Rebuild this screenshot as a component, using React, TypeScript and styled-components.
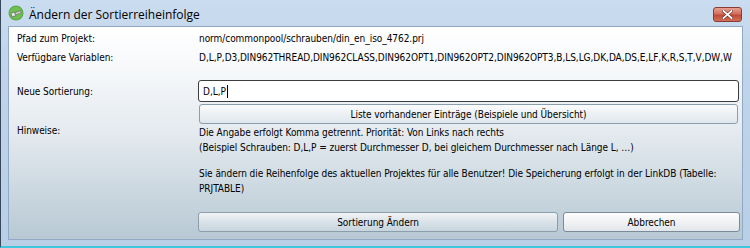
import React from "react";
import styled, { createGlobalStyle } from "styled-components";

const Global = createGlobalStyle`
  html, body { margin: 0; padding: 0; background: #fff; }
  #root { width: 750px; height: 248px; }
`;

const Window = styled.div`
  width: 750px;
  height: 248px;
  display: flex;
  flex-direction: column;
  box-sizing: border-box;
  background: linear-gradient(180deg, #cadcef 0%, #bfd4ea 30%, #b9cfe6 100%);
  border-left: 1px solid #39475a;
  border-bottom: 2px solid #3fc7e0;
  font-family: "DejaVu Sans Condensed", "DejaVu Sans", sans-serif;
  font-stretch: condensed;
  font-size: 10px;
  letter-spacing: -0.05px;
  color: #000;
  overflow: hidden;
`;

const TitleBar = styled.div`
  height: 26px;
  display: flex;
  align-items: center;
  padding: 0 8px 0 7px;
  gap: 5px;
  flex-shrink: 0;
`;

const Title = styled.div`
  flex: 1;
  font-family: "Open Sans", "Noto Sans", sans-serif;
  font-stretch: normal;
  letter-spacing: 0;
  font-size: 12px;
  color: #000;
  padding-top: 2px;
`;

const CloseButton = styled.div`
  width: 29px;
  height: 15px;
  margin-top: 3px;
  box-sizing: border-box;
  border: 1px solid #8a3a32;
  border-radius: 3px;
  background: linear-gradient(180deg, #e8a091 0%, #d46e5c 45%, #c24a36 55%, #d07058 100%);
  display: flex;
  align-items: center;
  justify-content: center;
`;

const Middle = styled.div`
  flex: 1;
  display: flex;
  min-width: 0;
  padding: 0 7px 6px 7px;
`;

const Client = styled.div`
  flex: 1;
  min-width: 0;
  box-sizing: border-box;
  border: 1px solid #8fa9c6;
  background: linear-gradient(180deg, #ffffff 0%, #f6f8fa 20%, #e4eaef 50%, #cdd9e1 75%, #b8c9d4 100%);
  padding: 3px 2px 7px 8px;
  display: flex;
  flex-direction: column;
`;

const Row = styled.div<{ $h: number; $mt?: number; $align?: string }>`
  display: grid;
  grid-template-columns: 181px minmax(0, 1fr);
  height: ${(p) => p.$h}px;
  margin-top: ${(p) => p.$mt ?? 0}px;
  align-items: ${(p) => p.$align ?? "center"};
`;

const Label = styled.div`
  white-space: nowrap;
`;

const Value = styled.div`
  white-space: nowrap;
  padding-left: 1px;
`;

const Input = styled.div`
  height: 22px;
  box-sizing: border-box;
  border: 1px solid #3c3c3c;
  border-radius: 3px;
  background: #fff;
  display: flex;
  align-items: center;
  padding-left: 4px;
  margin-right: 1px;
`;

const Caret = styled.span`
  display: inline-block;
  width: 1px;
  height: 13px;
  background: #000;
  margin-left: 1px;
`;

const Button = styled.div<{ $bright?: boolean }>`
  height: 20px;
  box-sizing: border-box;
  border: 1px solid ${(p) => (p.$bright ? "#7a8a99" : "#8a9eae")};
  border-radius: 3px;
  background: ${(p) =>
    p.$bright
      ? "linear-gradient(180deg, #fdfdfd 0%, #f0f2f4 50%, #e2e6ea 100%)"
      : "linear-gradient(180deg, rgba(255,255,255,0.75) 0%, rgba(240,243,246,0.55) 50%, rgba(215,224,230,0.45) 100%)"};
  display: flex;
  align-items: center;
  justify-content: center;
  white-space: nowrap;
`;

const ListButton = styled(Button)`
  margin-left: 1px;
  margin-right: 2px;
`;

const Hints = styled.div`
  line-height: 15px;
  padding-left: 1px;
`;

const Para = styled.div<{ $mt?: number }>`
  margin-top: ${(p) => p.$mt ?? 0}px;
  white-space: nowrap;
`;

const ButtonRow = styled.div`
  display: grid;
  grid-template-columns: 176px 360px 177px;
  column-gap: 5px;
  margin-top: auto;
  height: 20px;
`;

const AppIcon = () => (
  <svg width="16" height="16" viewBox="0 0 16 16">
    <circle cx="8" cy="8" r="7.5" fill="#5ba647" />
    <circle cx="8" cy="8" r="6.5" fill="#6fbf52" />
    <g transform="rotate(-20 8 8)">
      <rect x="3" y="6.5" width="4" height="4" rx="0.8" fill="#e6e6e6" stroke="#555" strokeWidth="0.6" />
      <rect x="7" y="7.3" width="6" height="2.4" fill="#d0d0d0" stroke="#555" strokeWidth="0.5" />
    </g>
  </svg>
);

const CloseX = () => (
  <svg width="11" height="9" viewBox="0 0 11 9">
    <path d="M1.5 1 L9.5 8 M9.5 1 L1.5 8" stroke="#6b2a22" strokeWidth="3" strokeLinecap="square" />
    <path d="M1.5 1 L9.5 8 M9.5 1 L1.5 8" stroke="#ffffff" strokeWidth="1.8" strokeLinecap="square" />
  </svg>
);

export default function App() {
  return (
    <>
      <Global />
      <Window>
        <TitleBar>
          <AppIcon />
          <Title>Ändern der Sortierreiheinfolge</Title>
          <CloseButton>
            <CloseX />
          </CloseButton>
        </TitleBar>
        <Middle>
          <Client>
            <Row $h={16}>
              <Label>Pfad zum Projekt:</Label>
              <Value>norm/commonpool/schrauben/din_en_iso_4762.prj</Value>
            </Row>
            <Row $h={16} $mt={3}>
              <Label>Verfügbare Variablen:</Label>
              <Value>
                D,L,P,D3,DIN962THREAD,DIN962CLASS,DIN962OPT1,DIN962OPT2,DIN962OPT3,B,LS,LG,DK,DA,DS,E,LF,K,R,S,T,V,DW,W
              </Value>
            </Row>
            <Row $h={22} $mt={15}>
              <Label>Neue Sortierung:</Label>
              <Input>
                D,L,P
                <Caret />
              </Input>
            </Row>
            <Row $h={20} $mt={2}>
              <span />
              <ListButton>Liste vorhandener Einträge (Beispiele und Übersicht)</ListButton>
            </Row>
            <Row $h={71} $mt={1} $align="start">
              <Label>Hinweise:</Label>
              <Hints>
                <Para>Die Angabe erfolgt Komma getrennt. Priorität: Von Links nach rechts</Para>
                <Para>
                  (Beispiel Schrauben: D,L,P = zuerst Durchmesser D, bei gleichem Durchmesser nach Länge L, …)
                </Para>
                <Para $mt={11}>
                  Sie ändern die Reihenfolge des aktuellen Projektes für alle Benutzer! Die Speicherung erfolgt in der
                  LinkDB (Tabelle:
                </Para>
                <Para>PRJTABLE)</Para>
              </Hints>
            </Row>
            <ButtonRow>
              <span />
              <Button>Sortierung Ändern</Button>
              <Button $bright>Abbrechen</Button>
            </ButtonRow>
          </Client>
        </Middle>
      </Window>
    </>
  );
}
